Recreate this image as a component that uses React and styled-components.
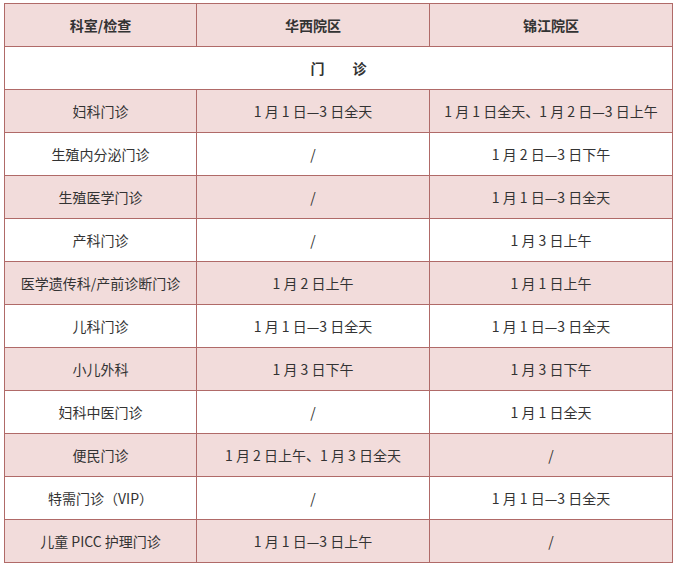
import React from "react";
import styled, { createGlobalStyle } from "styled-components";

const Global = createGlobalStyle`
  html, body { margin: 0; padding: 0; background: #fff; }
  body { font-family: "Noto Sans CJK SC", "Microsoft YaHei", sans-serif; }
`;

const Page = styled.div`
  padding: 3px 4px 0 4px;
`;

const Table = styled.table`
  width: 668px;
  border-collapse: collapse;
  table-layout: fixed;
  font-size: 14px;
  color: #333;
`;

const Row = styled.tr`
  height: 43px;
  background: ${(p) => (p.$pink ? "#f2dcdb" : "#fff")};
`;

const Cell = styled.td`
  border: 1px solid #b06a68;
  text-align: center;
  vertical-align: middle;
  padding: 0;
  font-weight: ${(p) => (p.$bold ? 700 : 400)};
  white-space: nowrap;
`;

const rows = [
  ["妇科门诊", "1 月 1 日—3 日全天", "1 月 1 日全天、1 月 2 日—3 日上午"],
  ["生殖内分泌门诊", "/", "1 月 2 日—3 日下午"],
  ["生殖医学门诊", "/", "1 月 1 日—3 日全天"],
  ["产科门诊", "/", "1 月 3 日上午"],
  ["医学遗传科/产前诊断门诊", "1 月 2 日上午", "1 月 1 日上午"],
  ["儿科门诊", "1 月 1 日—3 日全天", "1 月 1 日—3 日全天"],
  ["小儿外科", "1 月 3 日下午", "1 月 3 日下午"],
  ["妇科中医门诊", "/", "1 月 1 日全天"],
  ["便民门诊", "1 月 2 日上午、1 月 3 日全天", "/"],
  ["特需门诊（VIP）", "/", "1 月 1 日—3 日全天"],
  ["儿童 PICC 护理门诊", "1 月 1 日—3 日上午", "/"],
];

export default function App() {
  return (
    <>
      <Global />
      <Page>
        <Table>
          <colgroup>
            <col style={{ width: 192 }} />
            <col style={{ width: 233 }} />
            <col style={{ width: 243 }} />
          </colgroup>
          <tbody>
            <Row $pink>
              <Cell $bold>科室/检查</Cell>
              <Cell $bold>华西院区</Cell>
              <Cell $bold>锦江院区</Cell>
            </Row>
            <Row>
              <Cell $bold colSpan={3}>门　　诊</Cell>
            </Row>
            {rows.map((r, i) => (
              <Row key={i} $pink={i % 2 === 0}>
                {r.map((c, j) => (
                  <Cell key={j}>{c}</Cell>
                ))}
              </Row>
            ))}
          </tbody>
        </Table>
      </Page>
    </>
  );
}
